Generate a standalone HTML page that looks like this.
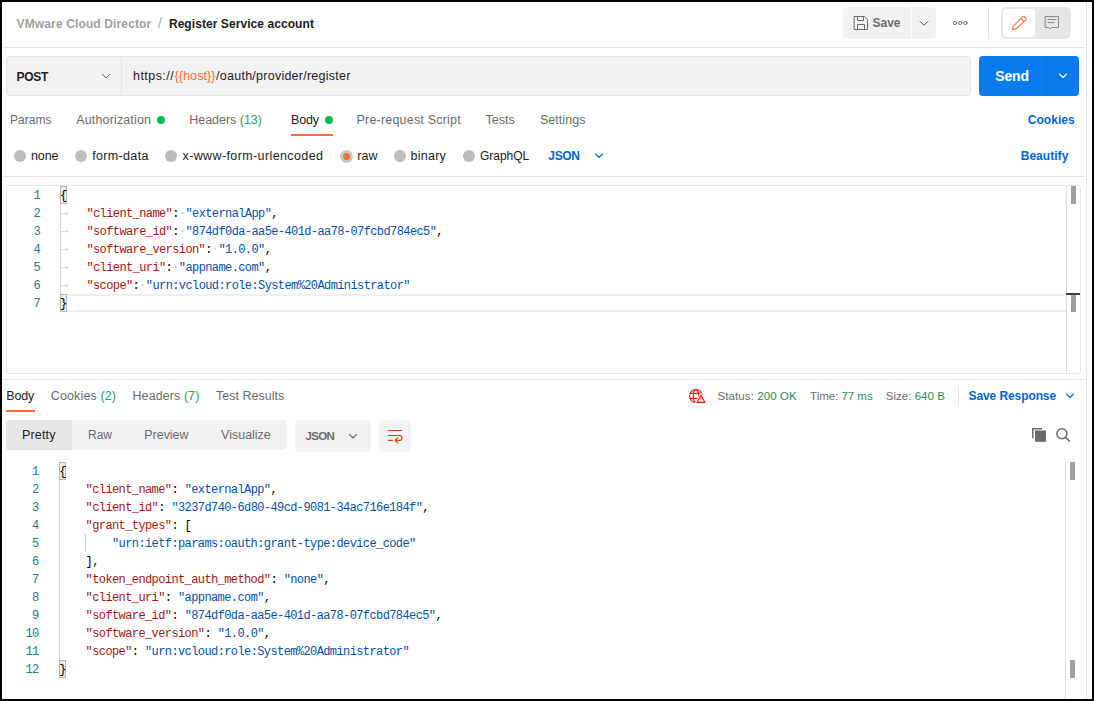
<!DOCTYPE html>
<html lang="en">
<head>
<meta charset="utf-8">
<title>Register Service account</title>
<style>
*{box-sizing:border-box;margin:0;padding:0}
html,body{width:1094px;height:701px;overflow:hidden;background:#000}
body{font-family:"Liberation Sans",sans-serif;font-size:12.5px;color:#212121;position:relative}
#page{position:absolute;left:2px;top:2px;width:1090px;height:697px;background:#fff;overflow:hidden}
/* everything inside #page is positioned in full-image coordinates via this shim */
#c{position:absolute;left:-2px;top:-2px;width:1094px;height:701px}
.a{position:absolute}
.t{position:absolute;white-space:pre;line-height:20px;height:20px}
.hl{position:absolute;height:1px;background:#e6e6e6}
.vl{position:absolute;width:1px;background:#e6e6e6}
.sec{color:#6b6b6b}
.blue{color:#0265d2;font-weight:bold}
.grn{color:#2a9d57}
.grn2{color:#2b8a55}
.dot{position:absolute;width:8px;height:8px;border-radius:50%;background:#0cbb52}
.radio{position:absolute;width:12px;height:12px;border-radius:50%;background:#bdbdbd}
.code{position:absolute;font-family:"Liberation Mono",monospace;font-size:12px;letter-spacing:-0.6px;line-height:18px;white-space:pre;color:#000}
.code .k{color:#a31515}
.code .s{color:#0451a5}
.ln{position:absolute;font-family:"Liberation Mono",monospace;font-size:12px;letter-spacing:-0.6px;line-height:18px;white-space:pre;color:#237893;text-align:right;width:30px}
.ws{color:#c8c8c8}
</style>
</head>
<body>
<div id="page"><div id="c">

<!-- header -->
<div class="t" id="bc1" style="left:16.6px;top:14px;font-weight:bold;color:#a0a0a0;font-size:12px;letter-spacing:0.13px">VMware Cloud Director</div>
<div class="t" id="bc2" style="left:158.0px;top:13px;color:#a6a6a6;letter-spacing:0.51px;font-size:14px">/</div>
<div class="t" id="bc3" style="left:168.9px;top:14px;font-weight:bold;letter-spacing:0.07px;font-size:12px">Register Service account</div>

<div class="a" style="left:843px;top:7px;width:68px;height:32px;background:#f2f2f2;border-radius:4px 0 0 4px"></div>
<div class="a" style="left:912px;top:7px;width:24px;height:32px;background:#f2f2f2;border-radius:0 4px 4px 0"></div>
<div class="t" id="save" style="left:872.6px;top:13px;font-weight:bold;color:#6b6b6b;letter-spacing:-0.04px;font-size:12px">Save</div>
<div class="vl" style="left:988px;top:7px;height:32px"></div>
<div class="a" style="left:1001px;top:7px;width:70px;height:32px;background:#e6e6e6;border-radius:5px"></div>
<div class="a" style="left:1003px;top:9px;width:32px;height:28px;background:#fff;border-radius:4px"></div>

<div class="hl" style="left:3px;top:47px;width:1084px"></div>
<div class="vl" style="left:1086px;top:2px;height:697px"></div>

<!-- url bar -->
<div class="a" style="left:6px;top:56px;width:965px;height:40px;background:#f2f2f2;border:1px solid #e4e4e4;border-radius:4px"></div>
<div class="vl" style="left:121px;top:57px;height:38px;background:#e4e4e4"></div>
<div class="t" id="post" style="left:16.6px;top:67px;font-weight:bold;letter-spacing:-0.32px;font-size:12px">POST</div>
<div class="t" id="url1" style="left:133.0px;top:66px;letter-spacing:0.45px">https://</div>
<div class="t" id="url2" style="left:174.5px;top:66px;color:#ff6c37;letter-spacing:0.10px">{{host}}</div>
<div class="t" id="url3" style="left:216.1px;top:66px;letter-spacing:0.25px">/oauth/provider/register</div>
<div class="a" style="left:979px;top:56px;width:100px;height:40px;background:#097bed;border-radius:4px"></div>
<div class="vl" style="left:1046px;top:56px;height:40px;background:#0a6fd3"></div>
<div class="t" id="send" style="left:995.3px;top:66px;font-weight:bold;font-size:14px;color:#fff;letter-spacing:-0.18px">Send</div>

<!-- request tabs -->
<div class="t sec" id="tp" style="left:9.9px;top:110px;letter-spacing:0.05px;font-size:12px">Params</div>
<div class="t sec" id="ta" style="left:76.3px;top:110px;letter-spacing:0.14px">Authorization</div>
<div class="dot" style="left:157px;top:116px"></div>
<div class="t sec" id="th" style="left:189.2px;top:110px;letter-spacing:-0.02px">Headers <span class="grn">(13)</span></div>
<div class="t" id="tb" style="left:291.0px;top:110px;letter-spacing:-0.17px">Body</div>
<div class="dot" style="left:325px;top:116px"></div>
<div class="a" style="left:291px;top:134px;width:42px;height:2px;background:#ff6c37"></div>
<div class="t sec" id="tpr" style="left:356.5px;top:110px;letter-spacing:0.20px">Pre-request Script</div>
<div class="t sec" id="tt" style="left:485.5px;top:110px;letter-spacing:0.03px">Tests</div>
<div class="t sec" id="ts" style="left:539.9px;top:110px;letter-spacing:0.06px">Settings</div>
<div class="t blue" id="tc" style="left:1027.8px;top:110px;letter-spacing:0.02px;font-size:12px">Cookies</div>

<!-- body type radios -->
<div class="radio" style="left:14px;top:150px"></div>
<div class="t" id="r1" style="left:31.0px;top:146px;letter-spacing:-0.10px">none</div>
<div class="radio" style="left:75px;top:150px"></div>
<div class="t" id="r2" style="left:92.2px;top:146px;letter-spacing:0.34px">form-data</div>
<div class="radio" style="left:165px;top:150px"></div>
<div class="t" id="r3" style="left:182.5px;top:146px;letter-spacing:0.39px">x-www-form-urlencoded</div>
<div class="radio" style="left:340px;top:150px;width:13px;height:13px;background:#c6c6c6"></div>
<div class="a" style="left:343px;top:153px;width:7px;height:7px;border-radius:50%;background:#ff6c37"></div>
<div class="t" id="r4" style="left:357.2px;top:146px;letter-spacing:0.07px">raw</div>
<div class="radio" style="left:394px;top:150px"></div>
<div class="t" id="r5" style="left:410.5px;top:146px;letter-spacing:0.25px">binary</div>
<div class="radio" style="left:463px;top:150px"></div>
<div class="t" id="r6" style="left:480.0px;top:146px;letter-spacing:-0.04px;font-size:12px">GraphQL</div>
<div class="t blue" id="r7" style="left:548.3px;top:146px;letter-spacing:-0.33px;font-size:12px">JSON</div>
<div class="t blue" id="r8" style="left:1020.7px;top:146px;letter-spacing:0.04px;font-size:12px">Beautify</div>

<div class="hl" style="left:3px;top:176px;width:1084px"></div>

<!-- request editor -->
<div class="a" style="left:6px;top:185px;width:1075px;height:189px;border:1px solid #e6e6e6;border-radius:3px"></div>
<div class="vl" style="left:1066px;top:186px;height:187px;background:#dcdcdc"></div>
<div class="a" style="left:1071px;top:186px;width:5px;height:18px;background:#a0a0a0"></div>
<div class="a" style="left:1071px;top:295px;width:5px;height:17px;background:#a0a0a0"></div>
<div class="a" style="left:1066px;top:293px;width:14px;height:2px;background:#3c3c3c"></div>

<!--REQ-->
<div class="a" style="left:60px;top:294px;width:1006px;height:18px;border-top:2px solid #eee;border-bottom:2px solid #eee"></div>
<div class="vl" style="left:60px;top:204px;height:90px;background:#d3d3d3"></div>
<div class="a" style="left:60px;top:186px;width:7px;height:18px;background:#e5efe5;border:1px solid #b9b9b9"></div>
<div class="a" style="left:60px;top:294px;width:7px;height:18px;background:#e5efe5;border:1px solid #b9b9b9"></div>
<div class="ln" id="qn1" style="left:10px;top:187px">1</div>
<div class="code" id="ql1" style="left:60.0px;top:187px">{</div>
<div class="ln" id="qn2" style="left:10px;top:205px">2</div>
<div class="code" id="ql2" style="left:86.4px;top:205px"><span class="k">"client_name"</span>:<span class="ws">·</span><span class="s">"externalApp"</span>,</div>
<div class="code ws" style="left:61px;top:203px">→</div>
<div class="ln" id="qn3" style="left:10px;top:223px">3</div>
<div class="code" id="ql3" style="left:86.4px;top:223px"><span class="k">"software_id"</span>:<span class="ws">·</span><span class="s">"874df0da-aa5e-401d-aa78-07fcbd784ec5"</span>,</div>
<div class="code ws" style="left:61px;top:221px">→</div>
<div class="ln" id="qn4" style="left:10px;top:241px">4</div>
<div class="code" id="ql4" style="left:86.4px;top:241px"><span class="k">"software_version"</span>:<span class="ws">·</span><span class="s">"1.0.0"</span>,</div>
<div class="code ws" style="left:61px;top:239px">→</div>
<div class="ln" id="qn5" style="left:10px;top:259px">5</div>
<div class="code" id="ql5" style="left:86.4px;top:259px"><span class="k">"client_uri"</span>:<span class="ws">·</span><span class="s">"appname.com"</span>,</div>
<div class="code ws" style="left:61px;top:257px">→</div>
<div class="ln" id="qn6" style="left:10px;top:277px">6</div>
<div class="code" id="ql6" style="left:86.4px;top:277px"><span class="k">"scope"</span>:<span class="ws">·</span><span class="s">"urn:vcloud:role:System%20Administrator"</span></div>
<div class="code ws" style="left:61px;top:275px">→</div>
<div class="ln" id="qn7" style="left:10px;top:295px">7</div>
<div class="code" id="ql7" style="left:60.0px;top:295px">}</div>
<!--/REQ-->
<div class="hl" style="left:3px;top:379px;width:1084px"></div>

<!-- response tabs -->
<div class="t" id="rb" style="left:6.3px;top:386px;letter-spacing:-0.17px">Body</div>
<div class="a" style="left:6px;top:410px;width:29px;height:2px;background:#ff6c37"></div>
<div class="t sec" id="rc" style="left:50.8px;top:386px;letter-spacing:0.13px">Cookies <span class="grn">(2)</span></div>
<div class="t sec" id="rh" style="left:132.5px;top:386px;letter-spacing:0.08px">Headers <span class="grn">(7)</span></div>
<div class="t sec" id="rt" style="left:216.1px;top:386px;letter-spacing:0.00px">Test Results</div>

<div class="t sec" id="st1" style="left:717.5px;top:386px;letter-spacing:0.09px;font-size:11.5px">Status: <span class="grn2">200 OK</span></div>
<div class="t sec" id="st2" style="left:810.1px;top:386px;letter-spacing:-0.03px;font-size:11.5px">Time: <span class="grn2">77 ms</span></div>
<div class="t sec" id="st3" style="left:885.7px;top:386px;letter-spacing:0.03px;font-size:11.5px">Size: <span class="grn2">640 B</span></div>
<div class="vl" style="left:958px;top:386px;height:20px"></div>
<div class="t blue" id="st4" style="left:968.5px;top:386px;letter-spacing:-0.09px;font-size:12px">Save Response</div>

<!-- response view tabs -->
<div class="a" style="left:6px;top:420px;width:281px;height:30px;background:#f2f2f2;border-radius:4px"></div>
<div class="a" style="left:6px;top:420px;width:66px;height:30px;background:#e6e6e6;border-radius:4px 0 0 4px"></div>
<div class="t" id="v1" style="left:21.9px;top:425px;letter-spacing:0.19px">Pretty</div>
<div class="t sec" id="v2" style="left:88.1px;top:425px;letter-spacing:-0.06px;font-size:12px">Raw</div>
<div class="t sec" id="v3" style="left:144.3px;top:425px;letter-spacing:-0.04px">Preview</div>
<div class="t sec" id="v4" style="left:221.1px;top:425px;letter-spacing:-0.01px">Visualize</div>
<div class="a" style="left:295px;top:420px;width:76px;height:32px;background:#f2f2f2;border-radius:4px"></div>
<div class="t" id="v5" style="left:305.6px;top:426px;font-weight:bold;color:#6b6b6b;letter-spacing:-0.74px;font-size:11.5px">JSON</div>
<div class="a" style="left:379px;top:420px;width:32px;height:32px;background:#f2f2f2;border-radius:4px"></div>

<!-- response editor -->
<div class="vl" style="left:1065px;top:462px;height:237px;background:#dcdcdc"></div>
<div class="a" style="left:1070px;top:462px;width:5px;height:18px;background:#a0a0a0"></div>
<div class="a" style="left:1070px;top:660px;width:5px;height:18px;background:#a0a0a0"></div>

<!--RES-->
<div class="vl" style="left:59px;top:480px;height:180px;background:#d3d3d3"></div>
<div class="vl" style="left:85px;top:534px;height:18px;background:#d3d3d3"></div>
<div class="a" style="left:59.2px;top:462px;width:7px;height:18px;background:#e5efe5;border:1px solid #b9b9b9"></div>
<div class="a" style="left:59.2px;top:660px;width:7px;height:18px;background:#e5efe5;border:1px solid #b9b9b9"></div>
<div class="ln" id="sn1" style="left:8.6px;top:463px">1</div>
<div class="code" id="sl1" style="left:59.2px;top:463px">{</div>
<div class="ln" id="sn2" style="left:8.6px;top:481px">2</div>
<div class="code" id="sl2" style="left:85.6px;top:481px"><span class="k">"client_name"</span>: <span class="s">"externalApp"</span>,</div>
<div class="ln" id="sn3" style="left:8.6px;top:499px">3</div>
<div class="code" id="sl3" style="left:85.6px;top:499px"><span class="k">"client_id"</span>: <span class="s">"3237d740-6d80-49cd-9081-34ac716e184f"</span>,</div>
<div class="ln" id="sn4" style="left:8.6px;top:517px">4</div>
<div class="code" id="sl4" style="left:85.6px;top:517px"><span class="k">"grant_types"</span>: [</div>
<div class="ln" id="sn5" style="left:8.6px;top:535px">5</div>
<div class="code" id="sl5" style="left:112.0px;top:535px"><span class="s">"urn:ietf:params:oauth:grant-type:device_code"</span></div>
<div class="ln" id="sn6" style="left:8.6px;top:553px">6</div>
<div class="code" id="sl6" style="left:85.6px;top:553px">],</div>
<div class="ln" id="sn7" style="left:8.6px;top:571px">7</div>
<div class="code" id="sl7" style="left:85.6px;top:571px"><span class="k">"token_endpoint_auth_method"</span>: <span class="s">"none"</span>,</div>
<div class="ln" id="sn8" style="left:8.6px;top:589px">8</div>
<div class="code" id="sl8" style="left:85.6px;top:589px"><span class="k">"client_uri"</span>: <span class="s">"appname.com"</span>,</div>
<div class="ln" id="sn9" style="left:8.6px;top:607px">9</div>
<div class="code" id="sl9" style="left:85.6px;top:607px"><span class="k">"software_id"</span>: <span class="s">"874df0da-aa5e-401d-aa78-07fcbd784ec5"</span>,</div>
<div class="ln" id="sn10" style="left:8.6px;top:625px">10</div>
<div class="code" id="sl10" style="left:85.6px;top:625px"><span class="k">"software_version"</span>: <span class="s">"1.0.0"</span>,</div>
<div class="ln" id="sn11" style="left:8.6px;top:643px">11</div>
<div class="code" id="sl11" style="left:85.6px;top:643px"><span class="k">"scope"</span>: <span class="s">"urn:vcloud:role:System%20Administrator"</span></div>
<div class="ln" id="sn12" style="left:8.6px;top:661px">12</div>
<div class="code" id="sl12" style="left:59.2px;top:661px">}</div>
<!--/RES-->
<svg class="a" id="icons" style="left:0;top:0" width="1094" height="701" viewBox="0 0 1094 701" fill="none" stroke-linecap="round" stroke-linejoin="round">
<!-- save (floppy) -->
<g stroke="#6b6b6b" stroke-width="1">
<path d="M854.5 16.5H864.5L867.5 19.5V29.5H854.5Z"/>
<path d="M857.5 16.5V20.5H863.5V16.5"/>
<path d="M857.5 29.5V24.5H864.5V29.5"/>
<path d="M920 21.3L924 25.3L928 21.3" stroke="#505050"/>
<circle cx="955" cy="23" r="1.6"/><circle cx="960.2" cy="23" r="1.6"/><circle cx="965.4" cy="23" r="1.6"/>
</g>
<!-- pencil -->
<g stroke="#ff6c37" stroke-width="1.1">
<path d="M1012.4 29.6L1013.2 26.3L1022.7 16.8a1.3 1.3 0 0 1 1.8 0L1025.7 18a1.3 1.3 0 0 1 0 1.8L1016.2 28.8Z"/>
<path d="M1021 18.6L1024 21.6"/>
</g>
<!-- comment -->
<g stroke="#8c8c8c" stroke-width="1">
<path d="M1045.5 16.5H1058.5V27.5H1051.5L1050 29L1048.5 27.5H1045.5Z"/>
<path d="M1048 19.5H1056M1048 22.5H1054"/>
</g>
<!-- method chevron -->
<path d="M102.4 74.2L106.2 78L110 74.2" stroke="#555" stroke-width="1"/>
<!-- send chevron -->
<path d="M1059.5 74L1063 77.5L1066.5 74" stroke="#fff" stroke-width="1.1"/>
<!-- JSON chevron (request) -->
<path d="M595.5 154L599 157.5L602.5 154" stroke="#0265d2" stroke-width="1.1"/>
<!-- Save response chevron -->
<path d="M1066.5 394L1070 397.5L1073.5 394" stroke="#0265d2" stroke-width="1.1"/>
<!-- JSON chevron (response) -->
<path d="M349.5 434.5L353 438L356.5 434.5" stroke="#6b6b6b" stroke-width="1.1"/>
<!-- globe warning -->
<g stroke="#e6190d" stroke-width="1.1">
<circle cx="696" cy="396" r="6.4"/>
<ellipse cx="696" cy="396" rx="2.7" ry="6.4"/>
<path d="M690.2 393.4H701.8M690.2 398.4H701.8"/>
<path d="M701 394.6L705.2 402.6H696.8Z" fill="#fff" stroke="#fff" stroke-width="3"/>
<path d="M701 394.9L704.9 402.4H697.1Z" fill="#fff"/>
<path d="M701 397.8V399.6M701 400.9V401" stroke-width="0.9"/>
</g>
<!-- wrap icon -->
<g stroke="#d4410f" stroke-width="1.2">
<path d="M388.5 430.5H401.5"/>
<path d="M388.5 435.5H399.5a2.45 2.45 0 0 1 0 4.9H395.6"/>
<path d="M397.6 438L395.2 440.4L397.6 442.8"/>
<path d="M388.5 440.4H392.5"/>
</g>
<!-- copy -->
<rect x="1035" y="430.5" width="11" height="11.3" fill="#6b6b6b"/>
<path d="M1032.8 438.3V428.8H1042" stroke="#6b6b6b" stroke-width="1.5" stroke-linecap="butt" stroke-linejoin="miter"/>
<!-- search -->
<circle cx="1061.9" cy="433.8" r="5" stroke="#6b6b6b" stroke-width="1.5"/>
<path d="M1065.7 437.6L1069.3 441" stroke="#6b6b6b" stroke-width="1.7"/>
</svg>
</div></div>
</body>
</html>
